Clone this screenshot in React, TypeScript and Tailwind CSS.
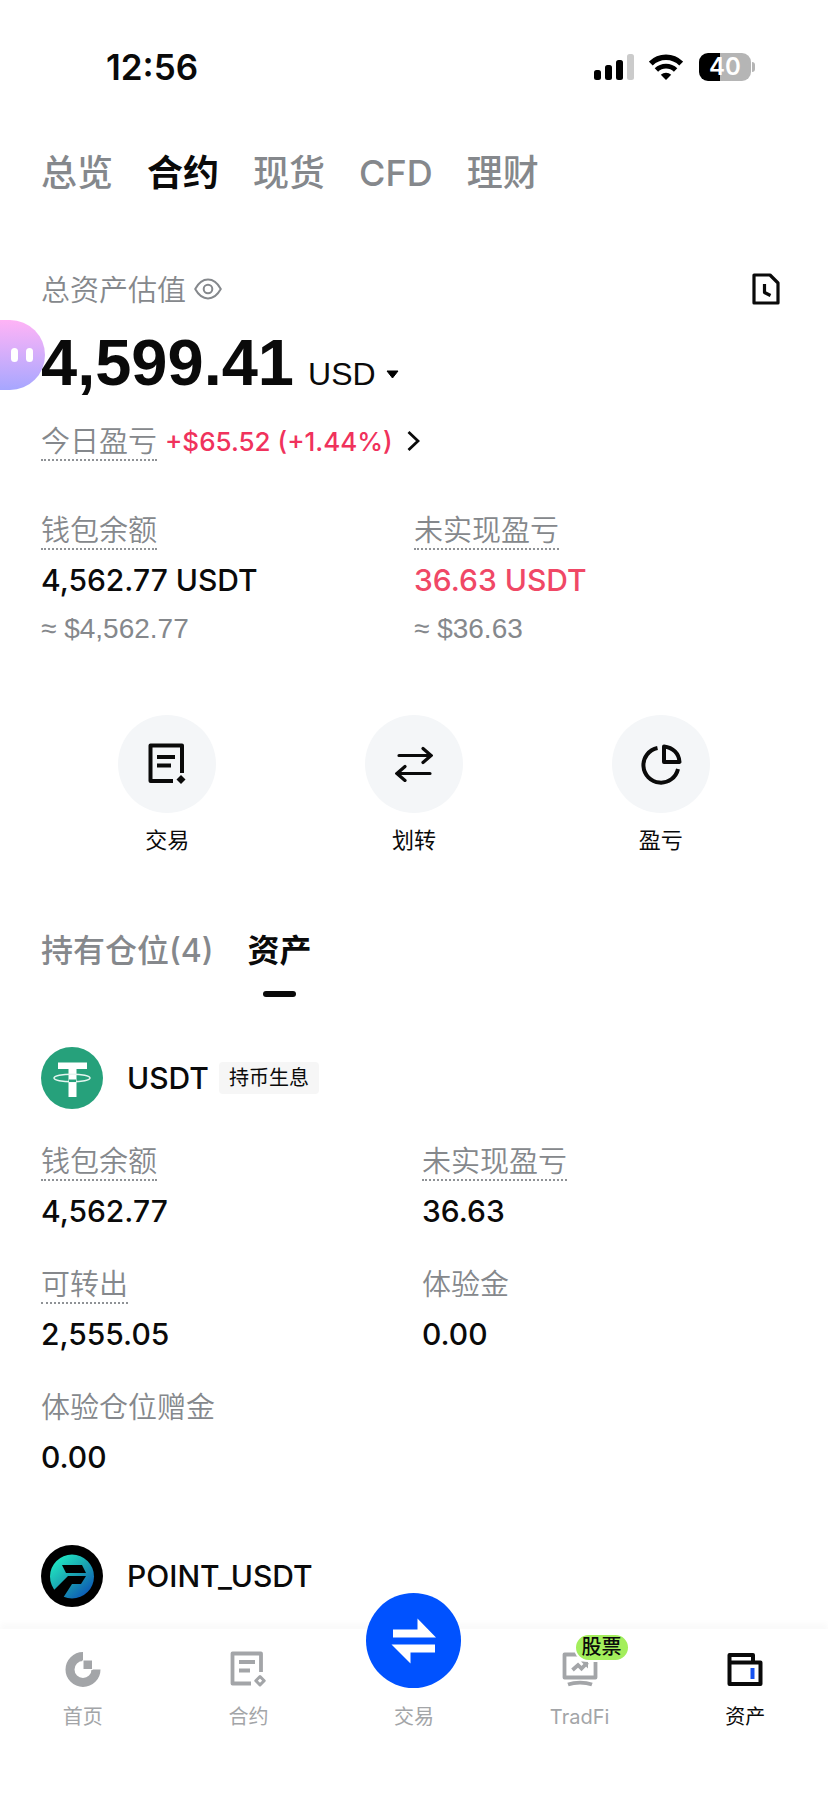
import React, { useState } from 'react';

interface Stat {
  label: string;
  value: string;
  dotted?: boolean;
}

const accountTabs = ['总览', '合约', '现货', 'CFD', '理财'];

const usdtStats: Stat[] = [
  { label: '钱包余额', value: '4,562.77', dotted: true },
  { label: '未实现盈亏', value: '36.63', dotted: true },
  { label: '可转出', value: '2,555.05', dotted: true },
  { label: '体验金', value: '0.00' },
  { label: '体验仓位赠金', value: '0.00' },
];

const SignalIcon = () => (
  <svg width="40" height="26" viewBox="0 0 40 26">
    <rect x="0" y="16" width="7" height="10" rx="2.5" />
    <rect x="11" y="11" width="7" height="15" rx="2.5" />
    <rect x="22" y="6" width="7" height="20" rx="2.5" />
    <rect x="33" y="0" width="7" height="26" rx="2.5" fill="#cbcbcb" />
  </svg>
);

const WifiIcon = () => (
  <svg width="34" height="26" viewBox="0 0 34 26">
    <path d="M1.800 9.500a21.500 21.500 0 0 1 30.400 0" fill="none" stroke="#000" strokeWidth="5.400" />
    <path d="M7.400 16a13.600 13.600 0 0 1 19.200 0" fill="none" stroke="#000" strokeWidth="4.800" />
    <path d="M17 26l-5.200-5.300a7.600 7.600 0 0 1 10.400 0z" />
  </svg>
);

const EyeIcon = () => (
  <svg width="28" height="22" viewBox="0 0 28 22" fill="none" stroke="#85888c" strokeWidth="2">
    <path d="M1.200 11C4.500 5 9 1.600 14 1.600S23.500 5 26.800 11C23.500 17 19 20.400 14 20.400S4.500 17 1.200 11z" strokeLinejoin="round" />
    <circle cx="14" cy="11" r="4.300" />
  </svg>
);

const HistoryIcon = () => (
  <svg width="28" height="32" viewBox="0 0 28 32" fill="none" stroke="#0a0a0a" strokeWidth="3.200" strokeLinejoin="round">
    <path d="M2 2h16l8 8v20H2z" />
    <path d="M12.500 11v8.500l6 3" />
  </svg>
);

const TradeIcon = () => (
  <svg width="40" height="42" viewBox="0 0 40 42" fill="none" stroke="#0a0a0a" strokeWidth="4">
    <path d="M35 30V2.500H3.500V38H26" strokeLinejoin="round" />
    <path d="M10 14h18M10 22.500h14" />
    <path d="M34 32l4.500 4.500-4.500 4.500-4.500-4.500z" fill="#0a0a0a" stroke="none" />
  </svg>
);

const TransferIcon = () => (
  <svg width="38" height="36" viewBox="0 0 38 36" fill="none" stroke="#0a0a0a" strokeWidth="3.200" strokeLinecap="round">
    <path d="M4 9.500h31.500M28 2.500l8 7-8 7" />
    <path d="M35 27.500H2.500M10 20.500l-8 7 8 7" />
  </svg>
);

const PieIcon = () => (
  <svg width="42" height="42" viewBox="0 0 42 42" fill="none" stroke="#0a0a0a" strokeWidth="4">
    <path d="M17.500 5A17.500 17.500 0 1 0 38 26" />
    <path d="M24 3.500c9 1 15 7 15.500 15.500H24z" strokeLinejoin="round" />
  </svg>
);

const TetherIcon = () => (
  <svg width="62" height="62" viewBox="0 0 62 62">
    <circle cx="31" cy="31" r="31" fill="#26a17b" />
    <path d="M17 15.500h29v6.500H35.500v28h-8V22H17z" fill="#fff" />
    <ellipse cx="31" cy="31" rx="18" ry="3.800" fill="none" stroke="#e4f5ef" strokeWidth="1.500" />
    <path d="M28 32.500h7v2.500h-7z" fill="#26a17b" />
  </svg>
);

const PointIcon = () => (
  <svg width="62" height="62" viewBox="0 0 62 62">
    <defs>
      <linearGradient id="point" x1="0.100" y1="0.200" x2="0.800" y2="1">
        <stop offset="0" stopColor="#1fe0c0" />
        <stop offset="0.500" stopColor="#1a9db0" />
        <stop offset="1" stopColor="#0a54b8" />
      </linearGradient>
    </defs>
    <circle cx="31" cy="31" r="31" fill="#000" />
    <circle cx="31" cy="31.500" r="22" fill="url(#point)" />
    <path d="M21 20h20l4 8H25z" />
    <path d="M27 31h18l-5 8h-9L22 53 12 46z" />
  </svg>
);

const HomeIcon = () => (
  <svg width="36" height="35" viewBox="0 0 36 35">
    <path d="M18 4.500A13 13 0 1 0 31 17.500" fill="none" stroke="#a3a5a8" strokeWidth="9" />
    <path d="M18 8h9.500v9.500H18z" fill="#a3a5a8" stroke="#fff" strokeWidth="1" />
  </svg>
);

const FuturesIcon = () => (
  <svg width="36" height="36" viewBox="0 0 36 36" fill="none" stroke="#a3a5a8" strokeWidth="3.800">
    <path d="M31 21V2.500H2.500V32.500H21" strokeLinejoin="round" />
    <path d="M9 11h16M9 19.500h11" />
    <path d="M30 25.500l4.200 4.200-4.200 4.200-4.200-4.200z" strokeWidth="3" strokeLinejoin="round" />
  </svg>
);

const TradFiIcon = () => (
  <svg width="36" height="35" viewBox="0 0 36 35" fill="none" stroke="#a3a5a8" strokeWidth="3.800">
    <path d="M2.500 2.500h31v23h-31z" strokeLinejoin="round" />
    <path d="M10.500 18l5.500-5 3.500 3.500 6-6" />
    <path d="M19 9.500h7v7z" fill="#a3a5a8" stroke="none" />
    <path d="M6 32.500c7-2.500 17-2.500 24 0" />
  </svg>
);

const WalletIcon = () => (
  <svg width="36" height="35" viewBox="0 0 36 35" fill="none" stroke="#0a0a0a" strokeWidth="4" strokeLinejoin="round">
    <path d="M2.500 10.500V3h23.500v7.500M2.500 10.500h31V32h-31z" />
    <path d="M25.500 16v11" stroke="#1652f0" strokeWidth="4" />
  </svg>
);

const SwapIcon = () => (
  <svg width="46" height="48" viewBox="0 0 46 48" fill="#fff">
    <path d="M2 12.500h24.500V1.500L45 20.500H2z" />
    <path d="M44 35.500H19.500v11L.500 27.500H44z" />
  </svg>
);

const Label: React.FC<{ dotted?: boolean; children: React.ReactNode }> = ({ dotted, children }) => (
  <span
    className={`inline-block border-b-2 pt-1 text-[29px] leading-[34px] font-[350] text-[#85888c] ${
      dotted ? 'border-dotted border-[#8f9296]' : 'border-transparent'
    }`}
  >
    {children}
  </span>
);

const ActionButton: React.FC<{ label: string; children: React.ReactNode }> = ({ label, children }) => (
  <button type="button" className="flex flex-col items-center">
    <span className="flex size-[98px] items-center justify-center rounded-full bg-[#f4f6f8]">{children}</span>
    <span className="mt-3 text-[22px] leading-8 text-[#0a0a0a]">{label}</span>
  </button>
);

const NavItem: React.FC<{ label: string; active?: boolean; badge?: string; children: React.ReactNode }> = ({
  label,
  active,
  badge,
  children,
}) => (
  <a href="#" className="flex flex-1 flex-col items-center pt-[22px]">
    <span className="relative flex h-9 items-center">
      {children}
      {badge && (
        <span className="absolute -top-[18px] left-3 rounded-full border-2 border-white bg-[#a3ee5c] px-1.5 text-[20px] leading-[25px] font-medium whitespace-nowrap text-[#0a0a0a]">
          {badge}
        </span>
      )}
    </span>
    <span
      className={`mt-3.5 font-['Inter','Noto_Sans_CJK_SC',sans-serif] text-xl leading-8 ${
        active ? 'text-[#0a0a0a]' : 'text-[#a3a5a8]'
      }`}
    >
      {label}
    </span>
  </a>
);

const App: React.FC = () => {
  const [accountTab, setAccountTab] = useState('合约');

  return (
    <div className="flex min-h-screen flex-col bg-white font-['Liberation_Sans','Noto_Sans_CJK_SC',sans-serif] text-[#0a0a0a]">
      <header className="flex h-[134px] items-center justify-between pr-[73px] pl-[106px]">
        <time className="font-['Inter',sans-serif] text-[35px] font-semibold">12:56</time>
        <div className="flex items-center">
          <SignalIcon />
          <span className="ml-[15px]">
            <WifiIcon />
          </span>
          <div className="ml-4 flex h-7 w-[52px] items-center justify-center rounded-[9px] bg-linear-to-r from-black from-40% to-[#b5b5b5] to-40% font-['Inter',sans-serif] text-2xl font-semibold text-white">
            40
          </div>
          <div className="ml-px h-2.5 w-[3px] rounded-r-full bg-[#b5b5b5]" />
        </div>
      </header>

      <main>
        <nav className="mt-[15px] flex gap-[34px] px-[41px] font-['Inter','Noto_Sans_CJK_SC',sans-serif] text-4xl font-medium">
          {accountTabs.map((tab) => (
            <button
              key={tab}
              type="button"
              onClick={() => setAccountTab(tab)}
              className={`leading-[48px] ${tab === accountTab ? 'font-bold text-[#0a0a0a]' : 'text-[#85888c]'}`}
            >
              {tab}
            </button>
          ))}
        </nav>

        <section className="relative mt-[72px] px-[41px]">
          <div className="flex h-10 items-center justify-between">
            <div className="flex items-center gap-2">
              <span className="pt-1 text-[29px] leading-9 font-[350] text-[#85888c]">总资产估值</span>
              <button type="button" aria-label="隐藏金额">
                <EyeIcon />
              </button>
            </div>
            <button type="button" aria-label="历史记录" className="mr-[7px]">
              <HistoryIcon />
            </button>
          </div>

          {/* floating assistant, docked on the left edge */}
          <button
            type="button"
            aria-label="助手"
            className="absolute top-[51px] left-0 flex h-[70px] w-[45px] items-center justify-end gap-2 rounded-r-full bg-linear-to-b from-[#ffb3f6] to-[#a6a6ff] pr-3"
          >
            <span className="h-3.5 w-[7px] rounded-full bg-white" />
            <span className="h-3.5 w-[7px] rounded-full bg-white" />
          </button>

          <div className="relative mt-[18px] flex items-baseline">
            <span className="text-[65px] leading-[72px] font-bold">4,599.41</span>
            <button type="button" className="ml-3.5 flex items-center gap-2.5 text-[32px]">
              USD
              <svg width="13" height="9" viewBox="0 0 13 9">
                <path d="M1 1h11L6.500 8z" stroke="#000" strokeLinejoin="round" />
              </svg>
            </button>
          </div>

          <a href="#" className="mt-[22px] flex items-center">
            <Label dotted>今日盈亏</Label>
            <span className="ml-2 font-['Inter',sans-serif] text-[26px] font-medium text-[#f0325c]">+$65.52 (+1.44%)</span>
            <svg className="ml-3.5" width="13" height="22" viewBox="0 0 13 22" fill="none" stroke="#0a0a0a" strokeWidth="2.800">
              <path d="M1.500 2l9.500 9-9.500 9" />
            </svg>
          </a>

          <div className="mt-[49px] grid grid-cols-2">
            <div>
              <Label dotted>钱包余额</Label>
              <p className="mt-2.5 font-['Inter',sans-serif] text-[30px] leading-10 font-medium">4,562.77 USDT</p>
              <p className="mt-[9px] text-[28px] leading-10 text-[#85888c]">≈ $4,562.77</p>
            </div>
            <div>
              <Label dotted>未实现盈亏</Label>
              <p className="mt-2.5 font-['Inter',sans-serif] text-[30px] leading-10 font-medium text-[#f04866]">36.63 USDT</p>
              <p className="mt-[9px] text-[28px] leading-10 text-[#85888c]">≈ $36.63</p>
            </div>
          </div>
        </section>

        <section className="mt-[66px] grid grid-cols-3 px-11">
          <ActionButton label="交易">
            <TradeIcon />
          </ActionButton>
          <ActionButton label="划转">
            <TransferIcon />
          </ActionButton>
          <ActionButton label="盈亏">
            <PieIcon />
          </ActionButton>
        </section>

        <section className="mt-[74px] px-[41px]">
          <div className="flex gap-[34px] font-['Inter','Noto_Sans_CJK_SC',sans-serif] text-[32px] leading-10">
            <button type="button" className="self-start font-medium text-[#85888c]">
              持有仓位(4)
            </button>
            <button type="button" className="flex flex-col items-center font-bold">
              资产
              <span className="mt-5 h-1.5 w-[33px] rounded-full bg-[#0a0a0a]" />
            </button>
          </div>

          <div className="mt-[50px] flex items-center">
            <TetherIcon />
            <h2 className="ml-6 font-['Inter',sans-serif] text-[30px] font-medium">USDT</h2>
            <span className="ml-2.5 rounded-sm bg-[#f6f6f6] px-2.5 text-xl leading-8">持币生息</span>
          </div>

          <dl className="mt-8 grid grid-cols-2 gap-x-4 gap-y-[33px]">
            {usdtStats.map((stat) => (
              <div key={stat.label}>
                <dt className="h-10">
                  <Label dotted={stat.dotted}>{stat.label}</Label>
                </dt>
                <dd className="mt-2.5 font-['Inter',sans-serif] text-[30px] leading-10 font-medium">{stat.value}</dd>
              </div>
            ))}
          </dl>

          <div className="mt-[68px] flex items-center">
            <PointIcon />
            <h2 className="ml-6 font-['Inter',sans-serif] text-[30px] font-medium">POINT_USDT</h2>
          </div>
        </section>
      </main>

      <nav className="sticky bottom-0 mt-auto flex h-[172px] items-start bg-white shadow-[0_-6px_6px_#fafafa]">
        <NavItem label="首页">
          <HomeIcon />
        </NavItem>
        <NavItem label="合约">
          <FuturesIcon />
        </NavItem>
        <a href="#" className="-mt-9 flex flex-1 flex-col items-center">
          <span className="flex size-[95px] items-center justify-center rounded-full bg-[#0052ff]">
            <SwapIcon />
          </span>
          <span className="mt-[13px] font-['Inter','Noto_Sans_CJK_SC',sans-serif] text-xl leading-8 text-[#a3a5a8]">交易</span>
        </a>
        <NavItem label="TradFi" badge="股票">
          <TradFiIcon />
        </NavItem>
        <NavItem label="资产" active>
          <WalletIcon />
        </NavItem>
      </nav>
    </div>
  );
};

export default App;
